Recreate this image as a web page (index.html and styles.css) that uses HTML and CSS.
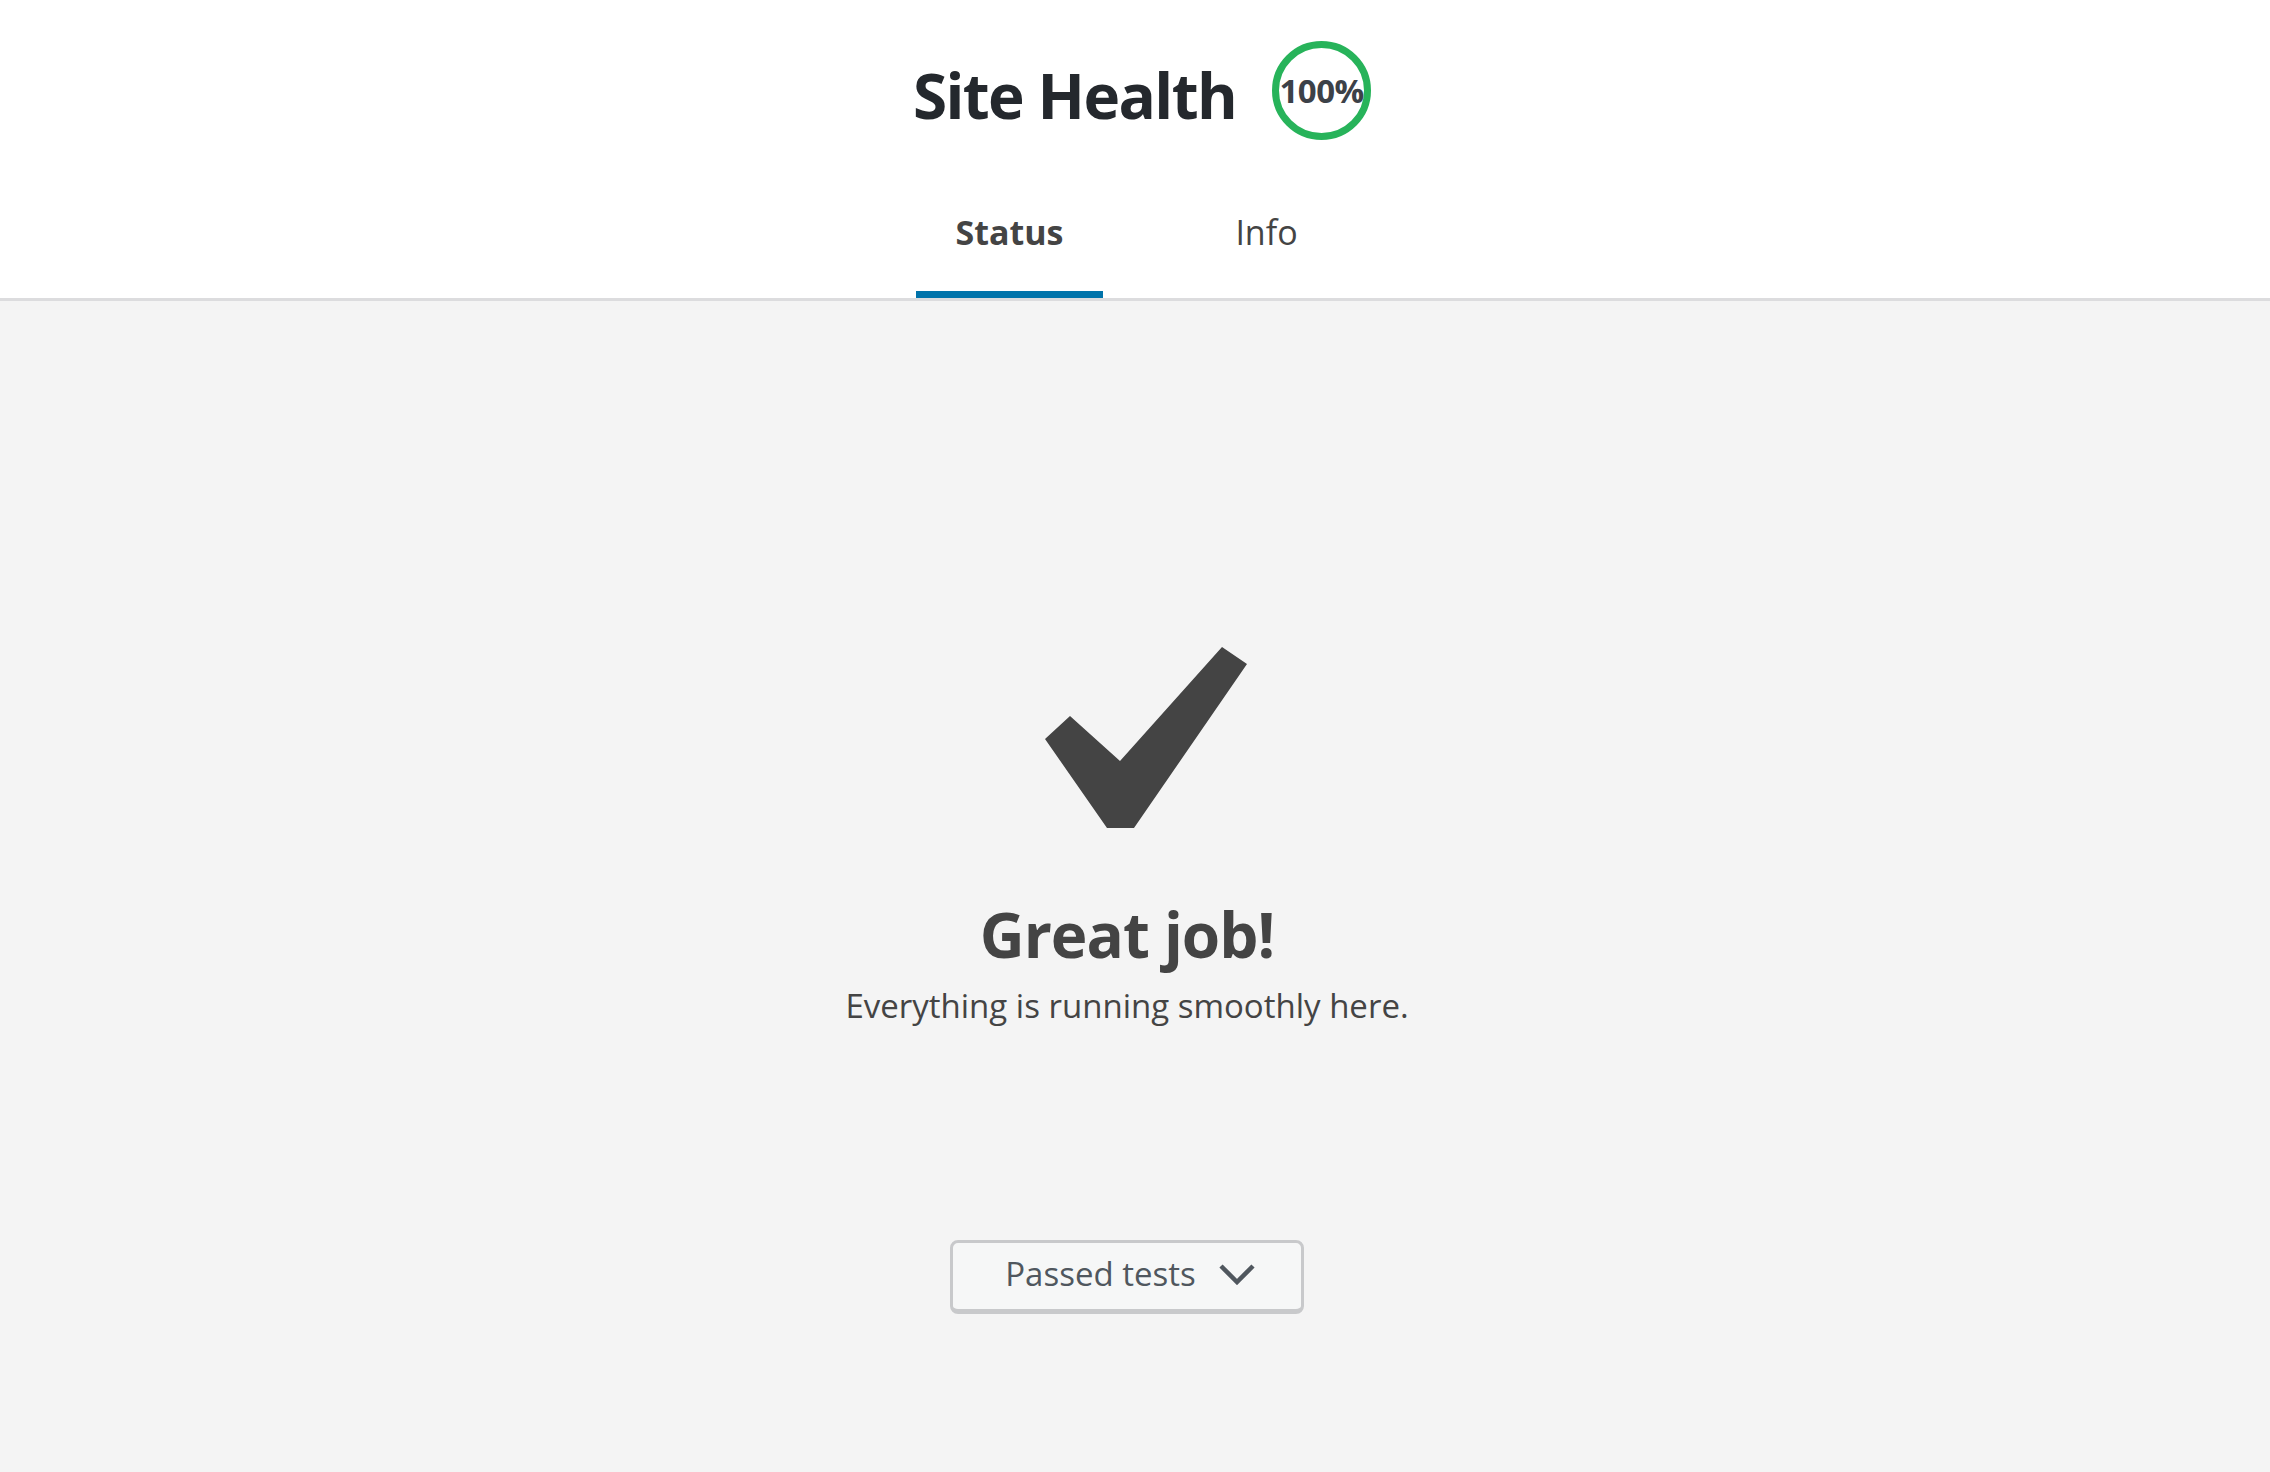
FILE: index.html
```html
<!DOCTYPE html>
<html lang="en">
<head>
  <meta charset="UTF-8" />
  <meta name="viewport" content="width=device-width, initial-scale=1.0"/>
  <title>Site Health</title>
  <link rel="stylesheet" href="styles.css">
</head>
<body>

<!-- Header -->
<div class="health-header">
  <div class="title-row">
    <h1 class="title">Site Health</h1>
    <div class="score">100%</div>
  </div>

  <nav class="tabs">
    <a href="#" class="tab active">Status</a>
    <a href="#" class="tab">Info</a>
  </nav>
</div>

<!-- Status Content -->
<div class="health-body">
  <svg class="check" width="240" height="181" viewBox="0 0 240 181">
    <polygon fill="#444444" points="63,69 113,114 215,0 240,17 127,181 100,181 38,92"/>
  </svg>
  <h2 class="great">Great job!</h2>
  <p class="sub">Everything is running smoothly here.</p>

  <button class="toggle">
    Passed tests
    <svg width="36" height="22" viewBox="0 0 36 22">
      <polyline points="2,3 18,19 34,3" fill="none" stroke="#50575e" stroke-width="4.5"/>
    </svg>
  </button>
</div>

</body>
</html>
```

FILE: styles.css
```css
body {
  margin: 0;
  font-family: 'Open Sans', sans-serif;
  background: #f4f4f4;
  min-height: 100vh;
}

.health-header {
  background: #ffffff;
  border-bottom: 3px solid #dcdcde;
  padding-top: 41px;
}

.title-row {
  display: flex;
  justify-content: center;
  align-items: flex-start;
  gap: 36px;
  padding-left: 14px;
}

.title {
  margin: 0;
  padding-top: 4px;
  font-size: 62px;
  line-height: 100px;
  font-weight: 700;
  letter-spacing: -1.6px;
  color: #24282d;
}

.score {
  width: 85px;
  height: 85px;
  border: 7px solid #27b35a;
  border-radius: 50%;
  display: flex;
  align-items: center;
  justify-content: center;
  font-size: 33px;
  font-weight: 700;
  color: #3c4148;
  letter-spacing: -0.5px;
}

.tabs {
  display: flex;
  justify-content: center;
  gap: 70px;
  margin-top: 62px;
  padding-left: 6px;
}

.tab {
  width: 187px;
  text-align: center;
  text-decoration: none;
  font-size: 34px;
  line-height: 50px;
  color: #444444;
  padding-bottom: 34px;
  border-bottom: 7px solid transparent;
}

.tab.active {
  font-weight: 700;
  border-bottom-color: #0073aa;
}

.health-body {
  text-align: center;
  padding: 346px 16px 0 0;
}

.check {
  display: block;
  margin: 0 auto;
}

.great {
  margin: 66px 0 0;
  font-size: 62px;
  line-height: 80px;
  font-weight: 700;
  letter-spacing: -1px;
  color: #444444;
}

.sub {
  margin: 12px 0 0;
  font-size: 33px;
  line-height: 40px;
  color: #444444;
}

.toggle {
  margin-top: 214px;
  display: inline-flex;
  align-items: center;
  gap: 23px;
  padding: 11px 46px 15px 52px;
  font-family: 'Open Sans', sans-serif;
  font-size: 33px;
  line-height: 40px;
  color: #50575e;
  background: #f6f7f7;
  border-style: solid;
  border-color: #c8c9cb;
  border-width: 3px 3px 5px;
  border-radius: 8px;
  cursor: pointer;
}
```
